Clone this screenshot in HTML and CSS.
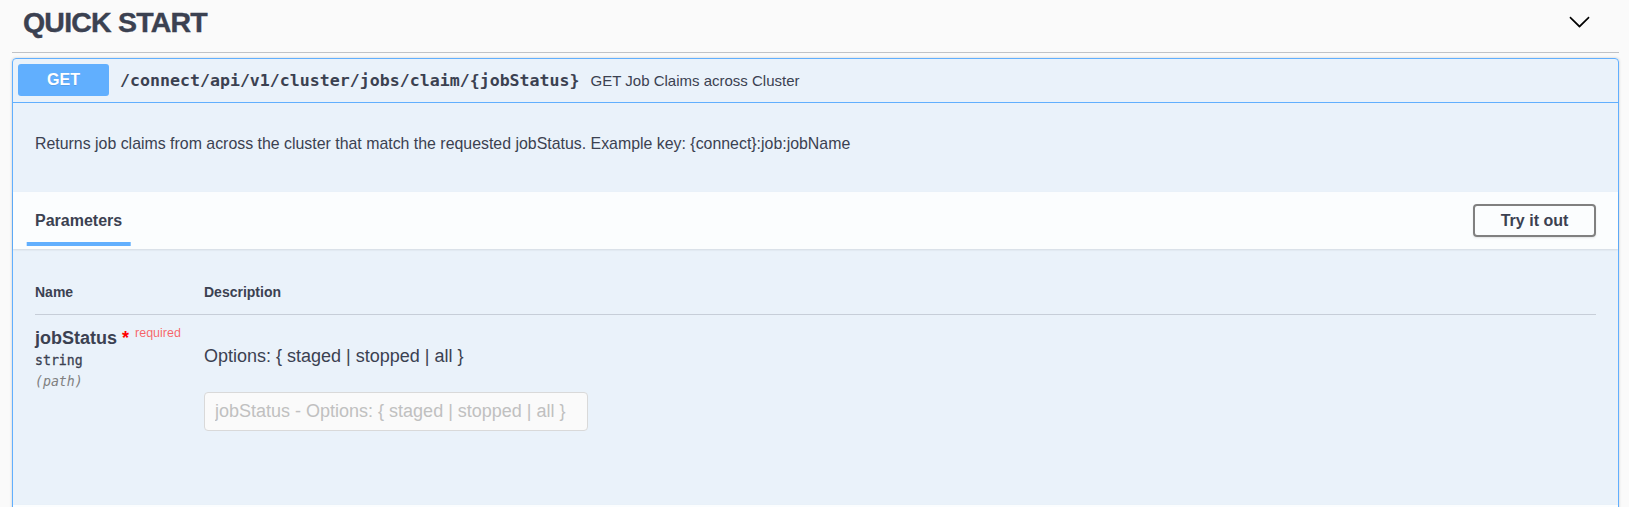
FILE: index.html
```html
<!DOCTYPE html>
<html lang="en">
<head>
<meta charset="utf-8">
<title>Quick Start</title>
<link rel="stylesheet" href="styles.css">
</head>
<body>
<div class="wrapper">
  <div class="tag">
    <h3 class="tag-title">QUICK START</h3>
    <svg class="arrow" viewBox="0 0 20 20" width="23" height="23" aria-hidden="true"><path d="M17.418 6.109c.272-.268.709-.268.979 0s.271.701 0 .969l-7.908 7.83c-.27.268-.707.268-.979 0l-7.908-7.83c-.27-.268-.27-.701 0-.969.271-.268.709-.268.979 0L10 13.25l7.418-7.141z"/></svg>
  </div>
  <div class="opblock">
    <div class="summary">
      <span class="method">GET</span>
      <span class="path">/connect/api/v1/cluster/jobs/claim/{jobStatus}</span>
      <span class="summary-desc">GET Job Claims across Cluster</span>
    </div>
    <div class="desc">
      <p>Returns job claims from across the cluster that match the requested jobStatus. Example key: {connect}:job:jobName</p>
    </div>
    <div class="section-header">
      <h4 class="tab"><span class="tab-label">Parameters</span></h4>
      <button class="try-out" type="button">Try it out</button>
    </div>
    <div class="params">
      <div class="params-head">
        <div>Name</div>
        <div>Description</div>
      </div>
      <div class="param-row">
        <div class="col-name">
          <div class="param-name">jobStatus<span class="star">&nbsp;*</span><span class="req">required</span></div>
          <div class="param-type">string</div>
          <div class="param-in">(path)</div>
        </div>
        <div class="col-desc">
          <p class="options">Options: { staged | stopped | all }</p>
          <input class="param-input" type="text" disabled placeholder="jobStatus - Options: { staged | stopped | all }">
        </div>
      </div>
    </div>
    <div class="section-header section-next"></div>
  </div>
</div>
</body>
</html>
```

FILE: styles.css
```css
html, body {
  margin: 0;
  padding: 0;
  background: #fafafa;
  overflow: hidden;
}
body {
  font-family: "Liberation Sans", Arial, sans-serif;
  color: #3b4151;
  height: 507px;
}
.wrapper {
  margin: 0 10px 0 12px;
}
.tag {
  display: flex;
  align-items: center;
  height: 43px;
  padding: 0 28px 9px 11px;
  border-bottom: 1px solid rgba(59, 65, 81, 0.3);
}
.tag-title {
  margin: 0;
  padding-top: 2px;
  flex: 1;
  font-size: 28.5px;
  letter-spacing: -0.8px;
  font-weight: bold;
  line-height: 1;
  -webkit-text-stroke: 0.4px #3b4151;
}
.arrow {
  flex: none;
  width: 23px;
  height: 23px;
  fill: #000;
}
.opblock {
  margin-top: 5px;
  border: 1px solid #61affe;
  border-radius: 4px;
  background: rgba(97, 175, 254, 0.1);
  box-shadow: 0 0 3px rgba(0, 0, 0, 0.19);
}
.summary {
  display: flex;
  align-items: center;
  padding: 5px 5px 6px;
  border-bottom: 1px solid #61affe;
}
.method {
  flex: none;
  width: 91px;
  height: 32px;
  line-height: 32px;
  text-align: center;
  background: #61affe;
  color: #fff;
  font-weight: bold;
  font-size: 16px;
  border-radius: 3px;
  text-shadow: 0 1px 0 rgba(0, 0, 0, 0.1);
}
.path {
  font-family: "DejaVu Sans Mono", monospace;
  font-weight: bold;
  font-size: 16.6px;
  padding: 0 11px;
}
.summary-desc {
  font-size: 15px;
}
.desc {
  padding: 32px 22px 39px;
}
.desc p {
  margin: 0;
  font-size: 15.9px;
  line-height: 18px;
}
.section-header {
  display: flex;
  align-items: center;
  justify-content: space-between;
  height: 57px;
  box-sizing: border-box;
  padding: 0 22px;
  background: rgba(255, 255, 255, 0.8);
  box-shadow: 0 1px 2px rgba(0, 0, 0, 0.1);
}
.tab {
  margin: 0;
  font-size: 16px;
  font-weight: bold;
  line-height: 18px;
}
.tab-label {
  position: relative;
  display: inline-block;
}
.tab-label::after {
  content: "";
  position: absolute;
  left: 50%;
  top: calc(100% + 12.5px);
  width: 120%;
  height: 4px;
  transform: translateX(-50%);
  background: #61affe;
}
.try-out {
  width: 123px;
  height: 33px;
  padding: 0;
  font: bold 16px "Liberation Sans", Arial, sans-serif;
  color: #3b4151;
  background: transparent;
  border: 2px solid #808080;
  border-radius: 4px;
  box-shadow: 0 1px 2px rgba(0, 0, 0, 0.1);
}
.params {
  height: 256px;
  box-sizing: border-box;
  padding: 23px 22px 0;
}
.params-head {
  display: grid;
  grid-template-columns: 169px 1fr;
  padding: 12px 0 13px;
  border-bottom: 1px solid rgba(59, 65, 81, 0.2);
  font-size: 14px;
  font-weight: bold;
  line-height: 17px;
}
.param-row {
  display: grid;
  grid-template-columns: 169px 1fr;
  padding-top: 13px;
}
.param-name {
  font-size: 18px;
  font-weight: bold;
  line-height: 20px;
  white-space: nowrap;
}
.star {
  color: red;
}
.req {
  color: rgba(255, 0, 0, 0.6);
  font-size: 12.5px;
  font-weight: normal;
  line-height: 0;
  vertical-align: 7px;
  padding-left: 6px;
}
.param-type {
  font-family: "DejaVu Sans Mono", monospace;
  font-size: 13.2px;
  line-height: 17px;
  margin-top: 3.5px;
  -webkit-text-stroke: 0.3px #3b4151;
}
.param-in {
  font-family: "DejaVu Sans Mono", monospace;
  font-size: 13.2px;
  line-height: 17px;
  font-style: italic;
  color: #808080;
  margin-top: 4px;
}
.options {
  margin: 17.5px 0 0;
  font-size: 18px;
  line-height: 21px;
}
.param-input {
  display: block;
  margin-top: 25.5px;
  width: 384px;
  height: 39px;
  box-sizing: border-box;
  padding: 8px 10px;
  border: 1px solid #d9d9d9;
  border-radius: 4px;
  background: #fafafa;
  font: 18px "Liberation Sans", Arial, sans-serif;
  color: #888;
}
.param-input::placeholder {
  color: #c0c0c0;
}
```
